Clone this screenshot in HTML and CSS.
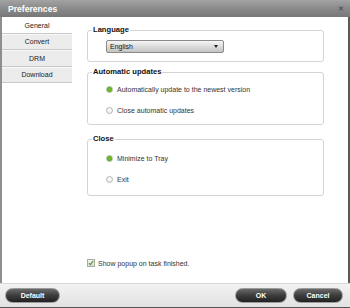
FILE: index.html
```html
<!DOCTYPE html>
<html lang="en">
<head>
<meta charset="UTF-8">
<title>Preferences</title>
<link rel="stylesheet" href="styles.css">
</head>
<body>

<div class="window">
  <div class="titlebar">
    <span class="title">Preferences</span>
    <span class="close">&#x2715;</span>
  </div>

  <div class="main">
    <div class="sidebar">
      <div class="tab active">General</div>
      <div class="tab">Convert</div>
      <div class="tab">DRM</div>
      <div class="tab">Download</div>
    </div>

    <div class="content">
      <fieldset class="group group-language">
        <legend>Language</legend>
        <div class="select">
          <span>English</span>
          <span class="arrow"></span>
        </div>
      </fieldset>

      <fieldset class="group group-updates">
        <legend>Automatic updates</legend>
        <div class="option"><span class="radio checked"></span>Automatically update to the newest version</div>
        <div class="option"><span class="radio"></span>Close automatic updates</div>
      </fieldset>

      <fieldset class="group group-close">
        <legend>Close</legend>
        <div class="option"><span class="radio checked"></span>Minimize to Tray</div>
        <div class="option"><span class="radio"></span>Exit</div>
      </fieldset>

      <div class="check-row">
        <span class="checkbox">
          <svg width="8" height="8" viewBox="0 0 8 8"><path d="M1.3 4.2 L3.2 6.2 L7 1.2" fill="none" stroke="#4fa61c" stroke-width="1.6"/></svg>
        </span>
        Show popup on task finished.
      </div>
    </div>
  </div>

  <div class="bottombar">
    <button class="btn">Default</button>
    <div class="spacer"></div>
    <button class="btn btn-ok">OK</button>
    <button class="btn btn-cancel">Cancel</button>
  </div>
</div>

</body>
</html>
```

FILE: styles.css
```css
body, button {
  font-family: "Liberation Sans", Arial, sans-serif;
}
body {
  margin: 0;
  padding: 0;
  background-color: #fff;
  width: 350px;
  height: 308px;
  overflow: hidden;
}
.window {
  display: flex;
  flex-direction: column;
  height: 308px;
}
.titlebar {
  height: 17px;
  display: flex;
  align-items: center;
  justify-content: space-between;
  padding: 0 6px 0 8px;
  background: linear-gradient(#a3a3a3, #8a8a8a 50%, #777);
  color: #fff;
}
.title {
  font-size: 8.6px;
  font-weight: bold;
}
.close {
  font-size: 7px;
  font-weight: bold;
  color: #555;
}
.main {
  flex: 1;
  display: flex;
  border-left: 2px solid #8e8e8e;
  border-right: 2px solid #5a5a5a;
}
.sidebar {
  width: 70px;
  display: flex;
  flex-direction: column;
}
.tab {
  height: 16.5px;
  box-sizing: border-box;
  display: flex;
  align-items: center;
  justify-content: center;
  font-size: 7px;
  color: #222;
  background-color: #ececec;
  border-top: 1px solid #f8f8f8;
  border-bottom: 1px solid #c8c8c8;
}
.tab.active {
  background-color: #fff;
  border-top-color: #fff;
}
.content {
  flex: 1;
  display: flex;
  flex-direction: column;
  padding: 8px 24px 14px 15px;
}
.group {
  margin: 0;
  border: 1px solid #d4d4d4;
  border-radius: 3px;
  padding: 0 10px 0 18px;
  min-width: 0;
}
.group legend {
  font-size: 7.6px;
  font-weight: bold;
  color: #111;
  line-height: 10px;
  padding: 0 1px;
  margin-left: -14px;
}
.group-language {
  padding-top: 5px;
  padding-bottom: 8px;
}
.group-updates {
  margin-top: 5px;
  padding-top: 6px;
  padding-bottom: 8px;
}
.group-close {
  margin-top: 9px;
  padding-top: 8px;
  padding-bottom: 10px;
}
.group-updates, .group-close {
  display: flex;
  flex-direction: column;
  row-gap: 9px;
}
.select {
  width: 118px;
  height: 13px;
  box-sizing: border-box;
  display: flex;
  align-items: center;
  justify-content: space-between;
  padding: 0 5px 0 3px;
  font-size: 7px;
  color: #111;
  border: 1px solid #8a8a8a;
  border-radius: 2px;
  background: linear-gradient(#f6f6f6, #dcdcdc 50%, #c4c4c4);
}
.arrow {
  width: 0;
  height: 0;
  border-left: 2.5px solid transparent;
  border-right: 2.5px solid transparent;
  border-top: 3px solid #222;
}
.option {
  height: 12px;
  display: flex;
  align-items: center;
  font-size: 7px;
  color: #333;
}
.radio {
  width: 7px;
  height: 7px;
  box-sizing: border-box;
  border-radius: 50%;
  border: 1px solid #b4b4b4;
  background: radial-gradient(circle at 50% 40%, #fff, #e4e4e4);
  margin-right: 4px;
}
.radio.checked {
  border-color: #a8b89c;
  background: radial-gradient(circle, #7fcc2e 0, #5ba81c 60%, #cfe6b8 100%);
}
.check-row {
  margin-top: auto;
  height: 12px;
  display: flex;
  align-items: center;
  font-size: 7px;
  color: #333;
}
.checkbox {
  width: 8px;
  height: 8px;
  box-sizing: border-box;
  border: 1px solid #aaa;
  background: linear-gradient(#f4f4f4, #d8d8d8);
  margin-right: 3px;
  display: flex;
  align-items: center;
  justify-content: center;
}
.checkbox svg {
  display: block;
}
.bottombar {
  height: 25px;
  box-sizing: border-box;
  display: flex;
  align-items: center;
  padding: 0 7px 0 5px;
  border-top: 1px solid #d8d8d8;
  border-bottom: 1px solid #555;
  background: linear-gradient(#f2f2f2, #e2e2e2);
}
.spacer {
  flex: 1;
}
.btn {
  height: 15px;
  width: 55px;
  border: 1px solid #9a9a9a;
  border-radius: 8px;
  background: linear-gradient(#6a6a6a, #3c3c3c 50%, #222);
  color: #fff;
  font-size: 7px;
  font-weight: bold;
  padding: 0;
  cursor: pointer;
}
.btn-ok {
  width: 52px;
  margin-right: 6px;
}
.btn-cancel {
  width: 50px;
}
```
